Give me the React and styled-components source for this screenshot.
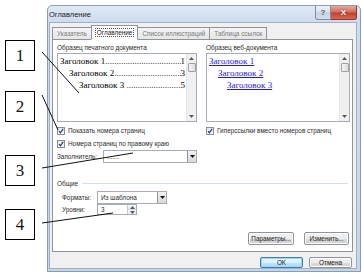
import React from "react";
import styled, { createGlobalStyle } from "styled-components";

const GlobalStyle = createGlobalStyle`
  html, body { margin: 0; padding: 0; background: #ffffff; }
  body { font-family: "Liberation Sans", Arial, sans-serif; }
  * { box-sizing: border-box; }
`;

const Page = styled.div`
  position: relative;
  width: 363px;
  height: 277px;
  display: flex;
  overflow: hidden;
  background: #ffffff;
`;

const Callouts = styled.div`
  position: relative;
  width: 47px;
  flex: none;
`;

const CalloutBox = styled.div`
  position: absolute;
  left: 5px;
  top: ${(p) => p.$top}px;
  width: 30px;
  height: 31px;
  border: 1px solid #000;
  background: #fff;
  display: flex;
  align-items: center;
  justify-content: center;
  font-family: "Liberation Serif", "Times New Roman", serif;
  font-size: 17px;
  color: #111;
`;

const Leaders = styled.svg`
  position: absolute;
  left: 0;
  top: 0;
  width: 363px;
  height: 277px;
  pointer-events: none;
  z-index: 5;
`;

const Dialog = styled.div`
  margin-top: 5px;
  width: 314px;
  height: 267px;
  flex: none;
  display: flex;
  flex-direction: column;
  background: linear-gradient(#dfe9f5, #cddcee 16px, #c6d6ea);
  border: 1px solid #8b9bb0;
  border-radius: 5px 5px 0 0;
  padding: 0 3px 2px 1px;
`;

const TitleBar = styled.div`
  height: 16px;
  flex: none;
  display: flex;
  align-items: flex-start;
`;

const Title = styled.div`
  flex: 1;
  padding-top: 4px;
  font-size: 7.5px;
  color: #1b1b1b;
`;

const CaptionButton = styled.div`
  height: 14px;
  width: ${(p) => (p.$close ? 26 : 16)}px;
  display: flex;
  align-items: center;
  justify-content: center;
  font-size: 8px;
  font-weight: bold;
  color: ${(p) => (p.$close ? "#fff" : "#4c5b70")};
  border: 1px solid ${(p) => (p.$close ? "#8a3a33" : "#7d8ea6")};
  border-top: none;
  border-left: ${(p) => (p.$close ? "none" : undefined)};
  border-radius: ${(p) => (p.$close ? "0 0 3px 0" : "0 0 0 3px")};
  background: ${(p) =>
    p.$close
      ? "linear-gradient(#e8a79c, #d3705f 45%, #c2412e 55%, #d56b55)"
      : "linear-gradient(#eef2f8, #d8e1ec 45%, #c5d2e2 55%, #d6e0ec)"};
  text-shadow: ${(p) => (p.$close ? "0 0 2px #6b1d12" : "none")};
`;

const Content = styled.div`
  flex: 1;
  background: #f0f0f0;
  border: 1px solid #9fb0c6;
  padding: 2px 3px 0 2px;
  display: flex;
  flex-direction: column;
`;

const TabRow = styled.div`
  height: 15px;
  flex: none;
  display: flex;
  align-items: flex-end;
  position: relative;
  z-index: 1;
  margin-bottom: -1px;
`;

const Tab = styled.div`
  height: ${(p) => (p.$active ? 15 : 13)}px;
  padding: 0 4px;
  margin-right: -1px;
  display: flex;
  align-items: center;
  font-size: 6.4px;
  color: ${(p) => (p.$active ? "#1b1b1b" : "#7a7a7a")};
  border: 1px solid #8e939c;
  border-bottom: ${(p) => (p.$active ? "1px solid #fff" : "1px solid #8e939c")};
  background: ${(p) => (p.$active ? "#fff" : "linear-gradient(#f4f4f4, #e6e6e6)")};
  position: relative;
  z-index: ${(p) => (p.$active ? 2 : 0)};
`;

const TabLabel = styled.span`
  outline: ${(p) => (p.$focus ? "1px dotted #555" : "none")};
  padding: 0 1px;
`;

const Panel = styled.div`
  height: 213px;
  flex: none;
  background: #fff;
  border: 1px solid #8e939c;
  padding: 4px 2px 0 4px;
  display: flex;
  flex-direction: column;
`;

const TopArea = styled.div`
  display: flex;
  height: 131px;
`;

const Column = styled.div`
  width: ${(p) => p.$w}px;
  flex: none;
  display: flex;
  flex-direction: column;
`;

const Divider = styled.div`
  width: 1px;
  margin: 0 6px 0 3px;
  background: #d5dfe5;
  align-self: stretch;
`;

const Caption = styled.div`
  height: 9px;
  font-size: 6.4px;
  line-height: 7px;
  color: #2b2b2b;
  white-space: nowrap;
`;

const PreviewBox = styled.div`
  height: 69px;
  border: 1px solid #a5acb5;
  background: #fff;
  display: flex;
`;

const PreviewText = styled.div`
  flex: 1;
  padding: 1px 1px 0 1px;
  font-family: "Liberation Serif", "Times New Roman", serif;
  font-size: 9px;
  color: #000;
  overflow: hidden;
`;

const TocLine = styled.div`
  display: flex;
  height: 12px;
  align-items: center;
  padding-left: ${(p) => p.$indent}px;
  white-space: nowrap;
`;

const Leader = styled.span`
  flex: 1;
  overflow: hidden;
  white-space: nowrap;
  &::before {
    content: "..............................................................";
  }
`;

const Link = styled.div`
  height: 12px;
  display: flex;
  align-items: center;
  padding-left: ${(p) => p.$indent}px;
  color: #1a1aff;
  text-decoration: underline;
  white-space: nowrap;
`;

const Scrollbar = styled.div`
  width: 10px;
  flex: none;
  background: #f0f0f0;
  border-left: 1px solid #e6e6e6;
  display: flex;
  flex-direction: column;
  align-items: center;
`;

const Arrow = styled.div`
  height: 9px;
  width: 100%;
  display: flex;
  align-items: center;
  justify-content: center;
`;

const Thumb = styled.div`
  width: 8px;
  height: 9px;
  border: 1px solid #a0a0a0;
  border-radius: 1px;
  background: linear-gradient(90deg, #f4f4f4, #dcdcdc);
`;

const Spacer = styled.div`
  flex: 1;
`;

const CheckRow = styled.label`
  height: 13px;
  display: flex;
  align-items: center;
  gap: 3px;
  font-size: 6.4px;
  color: #2b2b2b;
  white-space: nowrap;
  margin-top: ${(p) => p.$mt || 0}px;
`;

const Box = styled.span`
  width: 8px;
  height: 8px;
  flex: none;
  border: 1px solid #8f8f8f;
  background: linear-gradient(#e4e8ee, #f7f8fa);
  display: flex;
  align-items: center;
  justify-content: center;
`;

const FieldRow = styled.div`
  height: ${(p) => p.$h}px;
  display: flex;
  align-items: center;
  padding-left: ${(p) => p.$pl || 0}px;
  margin-top: ${(p) => p.$mt || 0}px;
`;

const FieldLabel = styled.span`
  width: ${(p) => p.$w}px;
  flex: none;
  font-size: 6.4px;
  color: #2b2b2b;
  white-space: nowrap;
`;

const Combo = styled.div`
  width: ${(p) => p.$w}px;
  height: ${(p) => p.$h || 13}px;
  border: 1px solid #a5acb5;
  background: #fff;
  display: flex;
  align-items: center;
  font-size: 6.4px;
  color: #2b2b2b;
`;

const ComboValue = styled.span`
  flex: 1;
  padding-left: 3px;
  white-space: nowrap;
  overflow: hidden;
`;

const DropButton = styled.span`
  width: 9px;
  height: 100%;
  flex: none;
  border-left: 1px solid #8e939c;
  background: linear-gradient(#f2f2f2, #d9d9d9);
  display: flex;
  align-items: center;
  justify-content: center;
`;

const SpinButtons = styled.span`
  width: 9px;
  height: 100%;
  flex: none;
  display: flex;
  flex-direction: column;
  border-left: 1px solid #c7cbd1;
`;

const SpinHalf = styled.span`
  flex: 1;
  display: flex;
  align-items: center;
  justify-content: center;
  background: linear-gradient(#f7f7f7, #e6e9ee);
  border-bottom: ${(p) => (p.$top ? "1px solid #d5d8dc" : "none")};
`;

const GroupHeader = styled.div`
  height: 8px;
  display: flex;
  align-items: center;
  gap: 4px;
  margin-top: 4px;
  font-size: 6.4px;
  color: #2b2b2b;
  &::after {
    content: "";
    flex: 1;
    height: 1px;
    margin-right: 2px;
    background: #d5dfe5;
  }
`;

const ButtonRow = styled.div`
  display: flex;
  justify-content: flex-end;
  gap: ${(p) => p.$gap}px;
  padding-right: ${(p) => p.$pr || 0}px;
  margin-top: ${(p) => p.$mt || 0}px;
`;

const Button = styled.div`
  width: ${(p) => p.$w}px;
  height: ${(p) => p.$h}px;
  border: 1px solid ${(p) => (p.$default ? "#3c7fb1" : "#8e939c")};
  border-radius: 2px;
  background: ${(p) =>
    p.$default
      ? "linear-gradient(#eaf6fd, #d9f0fc 50%, #bee6fd 51%, #a7d9f5)"
      : "linear-gradient(#f2f2f2, #ebebeb 50%, #dddddd 51%, #cfcfcf)"};
  box-shadow: inset 0 0 0 1px ${(p) => (p.$default ? "#9bd7f5" : "#fbfbfb")};
  display: flex;
  align-items: center;
  justify-content: center;
  font-size: 6.4px;
  color: #1b1b1b;
`;

const DownTri = () => (
  <svg width="5" height="3" viewBox="0 0 5 3">
    <path d="M0 0H5L2.5 3Z" fill="#111" />
  </svg>
);

const UpArrow = () => (
  <svg width="5" height="3" viewBox="0 0 5 3">
    <path d="M0 3H5L2.5 0Z" fill="#5a5a5a" />
  </svg>
);

const SmallDown = () => (
  <svg width="5" height="3" viewBox="0 0 5 3">
    <path d="M0 0H5L2.5 3Z" fill="#5a5a5a" />
  </svg>
);

const Check = () => (
  <svg width="6" height="6" viewBox="0 0 6 6">
    <path d="M1 3.2L2.4 4.8L5.2 0.9" fill="none" stroke="#1d3b8c" strokeWidth="1.2" />
  </svg>
);

const VScroll = () => (
  <Scrollbar>
    <Arrow>
      <UpArrow />
    </Arrow>
    <Thumb />
    <Spacer />
    <Arrow>
      <SmallDown />
    </Arrow>
  </Scrollbar>
);

const Checkbox = ({ children, mt }) => (
  <CheckRow $mt={mt}>
    <Box>
      <Check />
    </Box>
    <span>{children}</span>
  </CheckRow>
);

export default function App() {
  return (
    <>
      <GlobalStyle />
      <Page>
        <Callouts>
          <CalloutBox $top={40}>1</CalloutBox>
          <CalloutBox $top={91}>2</CalloutBox>
          <CalloutBox $top={155}>3</CalloutBox>
          <CalloutBox $top={209}>4</CalloutBox>
        </Callouts>
        <Leaders viewBox="0 0 363 277">
          <line x1="42" y1="52" x2="79" y2="93" stroke="#111" strokeWidth="1" />
          <line x1="42" y1="95" x2="58" y2="130" stroke="#111" strokeWidth="1" />
          <line x1="42" y1="168" x2="133" y2="153" stroke="#111" strokeWidth="1" />
          <line x1="42" y1="223" x2="113" y2="213" stroke="#111" strokeWidth="1" />
        </Leaders>
        <Dialog>
          <TitleBar>
            <Title>Оглавление</Title>
            <CaptionButton>?</CaptionButton>
            <CaptionButton $close>X</CaptionButton>
          </TitleBar>
          <Content>
            <TabRow>
              <Tab>Указатель</Tab>
              <Tab $active>
                <TabLabel $focus>Оглавление</TabLabel>
              </Tab>
              <Tab>Список иллюстраций</Tab>
              <Tab>Таблица ссылок</Tab>
            </TabRow>
            <Panel>
              <TopArea>
                <Column $w={140}>
                  <Caption>Образец печатного документа</Caption>
                  <PreviewBox>
                    <PreviewText>
                      <TocLine $indent={1}>
                        Заголовок 1<Leader />1
                      </TocLine>
                      <TocLine $indent={10}>
                        Заголовок 2<Leader />3
                      </TocLine>
                      <TocLine $indent={20}>
                        Заголовок 3&nbsp;<Leader />5
                      </TocLine>
                    </PreviewText>
                    <VScroll />
                  </PreviewBox>
                  <Checkbox mt={2}>Показать номера страниц</Checkbox>
                  <Checkbox>Номера страниц по правому краю</Checkbox>
                  <FieldRow $h={13}>
                    <FieldLabel $w={46}>Заполнитель:</FieldLabel>
                    <Combo $w={94}>
                      <ComboValue>.......</ComboValue>
                      <DropButton>
                        <DownTri />
                      </DropButton>
                    </Combo>
                  </FieldRow>
                </Column>
                <Divider />
                <Column $w={144}>
                  <Caption>Образец веб-документа</Caption>
                  <PreviewBox>
                    <PreviewText>
                      <Link $indent={1}>Заголовок 1</Link>
                      <Link $indent={10}>Заголовок 2</Link>
                      <Link $indent={19}>Заголовок 3</Link>
                    </PreviewText>
                    <VScroll />
                  </PreviewBox>
                  <Checkbox mt={2}>Гиперссылки вместо номеров страниц</Checkbox>
                </Column>
              </TopArea>
              <GroupHeader>Общие</GroupHeader>
              <FieldRow $h={13} $pl={5} $mt={4}>
                <FieldLabel $w={35}>Форматы:</FieldLabel>
                <Combo $w={70}>
                  <ComboValue>Из шаблона</ComboValue>
                  <DropButton>
                    <DownTri />
                  </DropButton>
                </Combo>
              </FieldRow>
              <FieldRow $h={11} $pl={5}>
                <FieldLabel $w={35}>Уровни:</FieldLabel>
                <Combo $w={40} $h={11}>
                  <ComboValue>3</ComboValue>
                  <SpinButtons>
                    <SpinHalf $top>
                      <UpArrow />
                    </SpinHalf>
                    <SpinHalf>
                      <SmallDown />
                    </SpinHalf>
                  </SpinButtons>
                </Combo>
              </FieldRow>
              <ButtonRow $gap={10} $pr={1} $mt={17}>
                <Button $w={46} $h={13}>Параметры...</Button>
                <Button $w={45} $h={13}>Изменить...</Button>
              </ButtonRow>
            </Panel>
            <ButtonRow $gap={6} $pr={1} $mt={5}>
              <Button $w={43} $h={11} $default>OK</Button>
              <Button $w={43} $h={11}>Отмена</Button>
            </ButtonRow>
          </Content>
        </Dialog>
      </Page>
    </>
  );
}
